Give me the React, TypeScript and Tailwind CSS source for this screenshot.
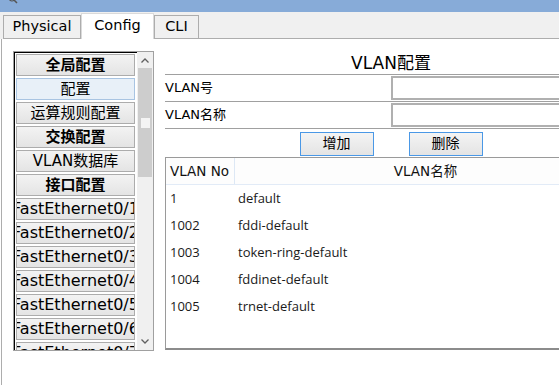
import React from "react";

const dv = "font-['DejaVu_Sans','Noto_Sans_CJK_SC',sans-serif]";

function Item({ label, bold, selected, eth }: { label: string; bold?: boolean; selected?: boolean; eth?: boolean }) {
  return (
    <div
      className={`h-[22px] mb-[2px] w-[119px] flex items-center justify-center overflow-hidden whitespace-nowrap border leading-none text-black ${
        eth ? "text-[16px]" : "text-[15px]"
      } ${
        selected
          ? "bg-[#e8f0f8] border-[#a8c4e2]"
          : "bg-gradient-to-b from-[#f3f3f3] to-[#e4e4e4] border-[#acacac]"
      } ${bold ? "font-bold" : ""}`}
    >
      <span className="shrink-0">{label}</span>
    </div>
  );
}

export default function App() {
  const items: { label: string; bold?: boolean; selected?: boolean; eth?: boolean }[] = [
    { label: "全局配置", bold: true },
    { label: "配置", selected: true },
    { label: "运算规则配置" },
    { label: "交换配置", bold: true },
    { label: "VLAN数据库" },
    { label: "接口配置", bold: true },
    { label: "FastEthernet0/1", eth: true },
    { label: "FastEthernet0/2", eth: true },
    { label: "FastEthernet0/3", eth: true },
    { label: "FastEthernet0/4", eth: true },
    { label: "FastEthernet0/5", eth: true },
    { label: "FastEthernet0/6", eth: true },
    { label: "FastEthernet0/7", eth: true },
  ];
  const rows = [
    ["1", "default"],
    ["1002", "fddi-default"],
    ["1003", "token-ring-default"],
    ["1004", "fddinet-default"],
    ["1005", "trnet-default"],
  ];
  return (
    <div className={`w-[559px] h-[385px] bg-white overflow-hidden flex flex-col ${dv}`}>
      {/* title bar */}
      <div className="h-[12px] bg-[#87abd8] relative overflow-hidden shrink-0">
        <svg className="absolute left-[8px] top-[-6px]" width="10" height="10" viewBox="0 0 10 10">
          <circle cx="4" cy="4" r="3" fill="none" stroke="#555" strokeWidth="1.2" />
          <line x1="6" y1="6" x2="9" y2="9" stroke="#555" strokeWidth="1.5" />
        </svg>
        <div className="absolute left-[290px] top-[-13px] text-[15px] leading-[16px] text-[#222]">Switch0</div>
      </div>
      {/* tab bar */}
      <div className="h-[27px] bg-[#f0f0f0] flex items-end pl-[3px] shrink-0 text-[14.5px] text-black">
        <div className="w-[78px] h-[24px] border border-[#adadad] bg-[#f0f0f0] flex items-center justify-center">
          Physical
        </div>
        <div className="w-[73px] h-[26px] border-t border-x border-[#dadada] bg-white flex items-center justify-center pb-[1px]">
          Config
        </div>
        <div className="w-[45px] h-[24px] border border-[#adadad] bg-[#f0f0f0] flex items-center justify-center">
          CLI
        </div>
        <div className="flex-1 h-[1px] bg-[#adadad]" />
      </div>
      {/* content */}
      <div className="flex-1 ml-[1px] border-l border-[#adadad] flex items-start pl-[11px] pt-[12px] overflow-hidden">
        {/* left list */}
        <div className="w-[141px] h-[300px] border border-[#a0a0a0] flex shrink-0">
          <div className="w-[123px] h-full border-l border-t border-black pl-[1px] pt-[1px] overflow-hidden">
            {items.map((it) => (
              <Item key={it.label} {...it} />
            ))}
          </div>
          <div className="w-[16px] h-full bg-[#f0f0f0] flex flex-col">
            <div className="h-[16px] flex items-center justify-center">
              <svg width="8" height="5" viewBox="0 0 8 5">
                <polyline points="0.5,4.5 4,1 7.5,4.5" fill="none" stroke="#606060" strokeWidth="1.3" />
              </svg>
            </div>
            <div className="h-[109px] mx-[1px] bg-[#cdcdcd] flex flex-col items-center pt-[50px]">
              <div className="w-[9px] h-[10px] bg-[#f4f4f4]" />
            </div>
            <div className="flex-1" />
            <div className="h-[17px] flex items-center justify-center">
              <svg width="8" height="5" viewBox="0 0 8 5">
                <polyline points="0.5,0.5 4,4 7.5,0.5" fill="none" stroke="#606060" strokeWidth="1.3" />
              </svg>
            </div>
          </div>
        </div>
        {/* right panel */}
        <div className="ml-[11px] w-[452px] shrink-0 flex flex-col">
          <div className="h-[24px] border-b border-[#a0a0a0] flex items-end justify-center text-[17px] leading-[22px] text-black">
            VLAN配置
          </div>
          <div className="h-[27px] border-b border-[#a0a0a0] flex items-center text-[13px] text-black">
            <div className="w-[226px]">VLAN号</div>
            <div className="flex-1 h-[24px] border-2 border-[#b0b0b0] bg-white" />
          </div>
          <div className="h-[27px] border-b border-[#a0a0a0] flex items-center text-[13px] text-black">
            <div className="w-[226px]">VLAN名称</div>
            <div className="flex-1 h-[24px] border-2 border-[#b0b0b0] bg-white" />
          </div>
          <div className="h-[28px] flex items-center justify-center gap-[35px] text-[14px] text-black pt-[1px]">
            <div className="w-[74px] h-[24px] border border-[#4a98e6] bg-gradient-to-b from-[#f4f4f4] to-[#e4e4e4] flex items-center justify-center">
              增加
            </div>
            <div className="w-[74px] h-[24px] border border-[#4a98e6] bg-gradient-to-b from-[#f4f4f4] to-[#e4e4e4] flex items-center justify-center">
              删除
            </div>
          </div>
          <div className="h-[193px] border-t border-l border-r border-[#9a9a9a] border-b-2 border-b-[#8c8c8c] bg-white">
            <div className="h-[27px] flex border-b border-[#e2ebf7] bg-[#fdfdfd] text-[13.5px] text-[#111]">
              <div className="w-[69px] border-r border-[#dde8f5] flex items-center pl-[4px]">VLAN No</div>
              <div className="flex-1 flex items-center justify-center">VLAN名称</div>
            </div>
            <div className="font-['Open_Sans','Noto_Sans',sans-serif] text-[13px] text-[#1a1a1a]">
              {rows.map(([n, name]) => (
                <div key={n} className="h-[27px] flex items-center">
                  <div className="w-[72px] pl-[4px]">{n}</div>
                  <div>{name}</div>
                </div>
              ))}
            </div>
          </div>
        </div>
      </div>
    </div>
  );
}
